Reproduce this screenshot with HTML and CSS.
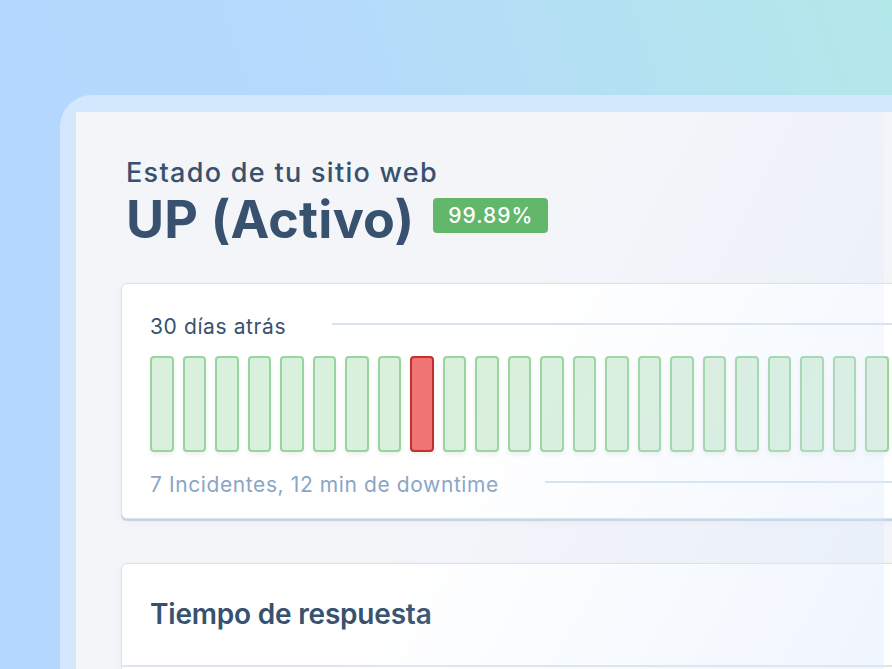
FILE: index.html
```html
<!DOCTYPE html>
<html lang="es">
<head>
<meta charset="utf-8">
<title>Estado de tu sitio web</title>
<link rel="stylesheet" href="styles.css">
</head>
<body>
<div class="stage">
  <div class="frame">
    <main class="panel">
      <header class="status">
        <p class="eyebrow">Estado de tu sitio web</p>
        <div class="state-row">
          <h1 class="state">UP (Activo)</h1>
          <span class="badge">99.89%</span>
        </div>
      </header>

      <section class="card uptime">
        <div class="row head">
          <span class="label">30 días atrás</span>
          <span class="rule"></span>
        </div>
        <div class="bars">
          <span class="bar"></span><span class="bar"></span><span class="bar"></span>
          <span class="bar"></span><span class="bar"></span><span class="bar"></span>
          <span class="bar"></span><span class="bar"></span><span class="bar down"></span>
          <span class="bar"></span><span class="bar"></span><span class="bar"></span>
          <span class="bar"></span><span class="bar"></span><span class="bar"></span>
          <span class="bar"></span><span class="bar"></span><span class="bar"></span>
          <span class="bar"></span><span class="bar"></span><span class="bar"></span>
          <span class="bar"></span><span class="bar"></span><span class="bar"></span>
          <span class="bar"></span><span class="bar"></span><span class="bar"></span>
          <span class="bar"></span><span class="bar"></span><span class="bar"></span>
        </div>
        <div class="row foot">
          <span class="note">7 Incidentes, 12 min de downtime</span>
          <span class="rule"></span>
        </div>
      </section>

      <section class="card response">
        <h2 class="card-title">Tiempo de respuesta</h2>
        <div class="card-body"></div>
      </section>
    </main>
  </div>
  <div class="sheen"></div>
</div>
</body>
</html>
```

FILE: styles.css
```css
html, body {
  margin: 0;
  padding: 0;
  overflow: hidden;
  height: 100%;
}

body {
  font-family: "Inter", "Noto Sans", sans-serif;
  color: #37516e;
  background: linear-gradient(72deg, #b4d7fe 0%, #b5d9fc 45%, #b4e3f0 80%, #b3e8e9 100%);
}

.stage {
  position: relative;
  width: 1200px;
  height: 669px;
  padding: 95px 0 0 60px;
  box-sizing: border-box;
}

.frame {
  background: #d4e8fd;
  border-radius: 32px 0 0 0;
  padding: 17px 0 0 16px;
  height: 700px;
}

.panel {
  background: #f3f5f9;
  height: 100%;
  padding: 45px 0 0 45px;
  box-sizing: border-box;
}

.status {
  padding-left: 5px;
}

.eyebrow {
  margin: 0;
  font-size: 27px;
  line-height: 32px;
  font-weight: 500;
  letter-spacing: 1.3px;
}

.state-row {
  display: flex;
  align-items: flex-start;
  gap: 19px;
  margin-top: 3px;
}

.state {
  margin: 0;
  font-size: 52px;
  line-height: 56px;
  font-weight: 700;
  letter-spacing: 0.2px;
}

.badge {
  margin-top: 6px;
  height: 35px;
  display: flex;
  align-items: center;
  padding: 0 15px;
  background: #62b76b;
  color: #ffffff;
  border-radius: 4px;
  font-size: 21px;
  font-weight: 500;
  letter-spacing: 1px;
}

.card {
  width: 960px;
  background: #ffffff;
  border: 1px solid #d9e3ef;
  border-radius: 6px;
  box-shadow: 0 2px 0 #c9d3df, 0 3px 6px rgba(60, 80, 110, 0.06);
}

.uptime {
  margin-top: 35px;
  padding: 30px 0 21px 28px;
  box-sizing: border-box;
  height: 236px;
}

.row {
  display: flex;
  align-items: center;
  gap: 46px;
  font-size: 21px;
  line-height: 26px;
  letter-spacing: 0.6px;
}

.label {
  white-space: nowrap;
}

.note {
  white-space: nowrap;
  color: #8aa6c4;
}

.rule {
  flex: 1;
  height: 2px;
  background: #d7e3f0;
  margin-bottom: 6px;
}

.bars {
  display: flex;
  gap: 9px;
  margin: 16px 0 20px;
}

.bar {
  flex: none;
  width: 23.5px;
  height: 96px;
  box-sizing: border-box;
  border: 2px solid #99d49e;
  background: #d9f0dc;
  border-radius: 4px;
  box-shadow: 0 3px 4px rgba(60, 90, 70, 0.08);
}

.bar.down {
  border-color: #c32f2f;
  background: #f07474;
}

.response {
  margin-top: 44px;
}

.card-title {
  margin: 0;
  padding: 33px 0 34px 28px;
  font-size: 28px;
  line-height: 34px;
  font-weight: 600;
  letter-spacing: -0.2px;
  border-bottom: 2px solid #dde6f0;
}

.card-body {
  height: 120px;
}

.sheen {
  position: absolute;
  left: 76px;
  top: 112px;
  width: 808px;
  height: 557px;
  border-radius: 0 8px 0 0;
  background: linear-gradient(118deg, rgba(225, 236, 252, 0) 50%, rgba(218, 232, 252, 0.4) 100%);
  pointer-events: none;
}
```
